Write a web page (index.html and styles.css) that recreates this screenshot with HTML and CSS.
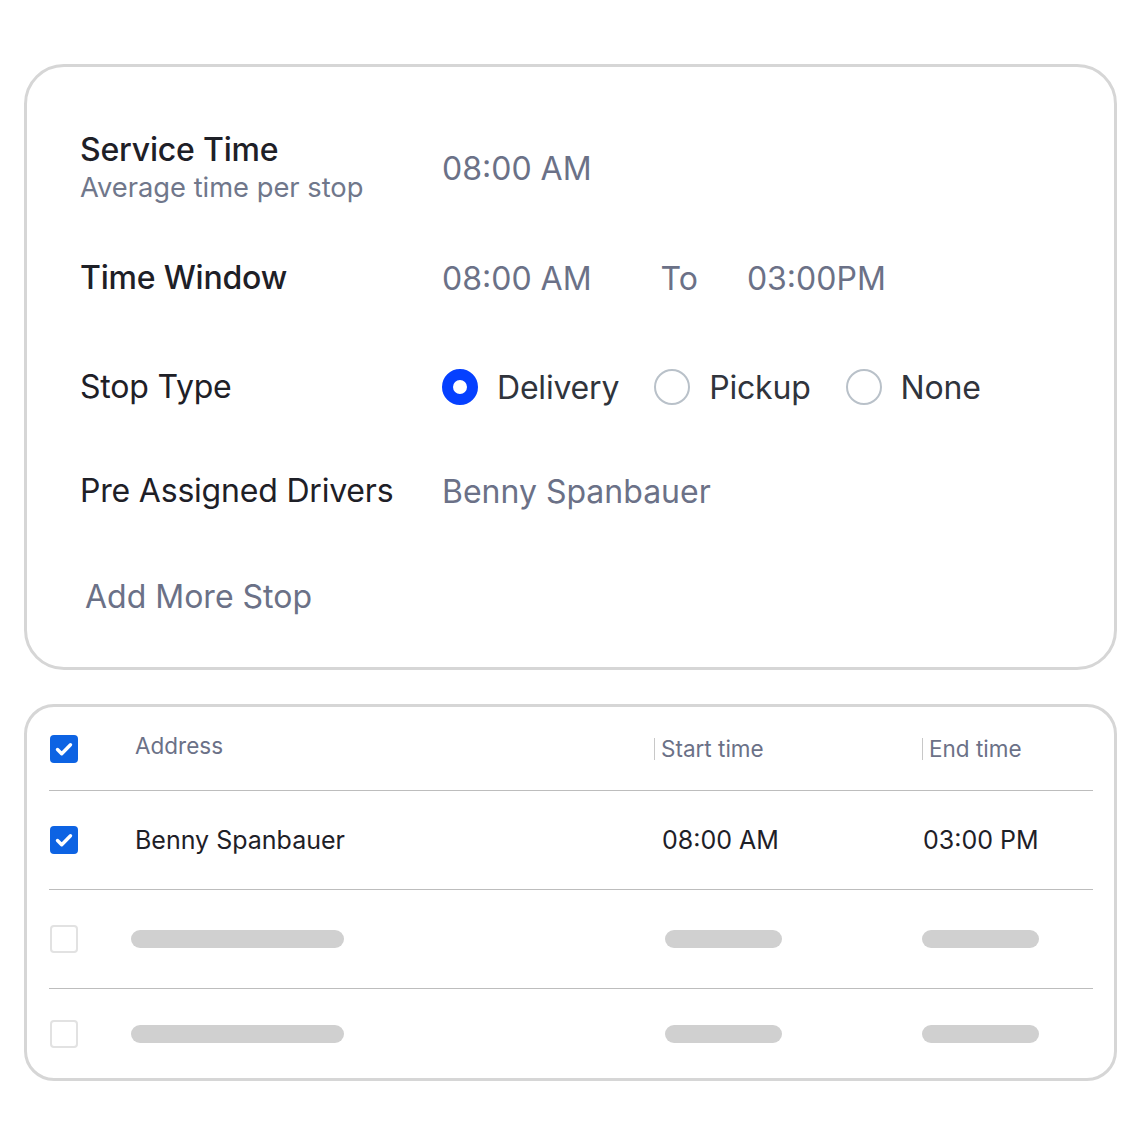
FILE: index.html
```html
<!DOCTYPE html>
<html lang="en">
<head>
    <meta charset="UTF-8">
    <meta name="viewport" content="width=device-width, initial-scale=1.0">
    <title>Stop Settings</title>
    <link rel="stylesheet" href="styles.css">
</head>
<body>

<div class="page">
    <div class="card settings">
        <div class="field">
            <div class="label">
                <div class="label-title strong">Service Time</div>
                <div class="label-hint">Average time per stop</div>
            </div>
            <div class="value">08:00 AM</div>
        </div>

        <div class="field">
            <div class="label-title strong">Time Window</div>
            <div class="value">
                <span>08:00 AM</span>
                <span class="to">To</span>
                <span>03:00PM</span>
            </div>
        </div>

        <div class="field">
            <div class="label-title">Stop Type</div>
            <div class="radios">
                <label class="radio"><span class="dot checked"></span>Delivery</label>
                <label class="radio"><span class="dot"></span>Pickup</label>
                <label class="radio"><span class="dot"></span>None</label>
            </div>
        </div>

        <div class="field">
            <div class="label-title">Pre Assigned Drivers</div>
            <div class="value">Benny Spanbauer</div>
        </div>

        <div class="field">
            <button class="add-stop">Add More Stop</button>
        </div>
    </div>

    <div class="card stops">
        <div class="row head">
            <span class="check on">
                <svg viewBox="0 0 28 28" width="28" height="28"><path d="M7.5 14.5l4.2 4.2 8.8-9" fill="none" stroke="#fff" stroke-width="3.4" stroke-linecap="round" stroke-linejoin="round"/></svg>
            </span>
            <div class="th">Address</div>
            <div class="th sep start-sep">Start time</div>
            <div class="th sep">End time</div>
        </div>

        <div class="row">
            <span class="check on">
                <svg viewBox="0 0 28 28" width="28" height="28"><path d="M7.5 14.5l4.2 4.2 8.8-9" fill="none" stroke="#fff" stroke-width="3.4" stroke-linecap="round" stroke-linejoin="round"/></svg>
            </span>
            <div class="td">Benny Spanbauer</div>
            <div class="td time">08:00 AM</div>
            <div class="td time">03:00 PM</div>
        </div>

        <div class="row">
            <span class="check"></span>
            <div><div class="skeleton wide"></div></div>
            <div><div class="skeleton short shift"></div></div>
            <div><div class="skeleton short"></div></div>
        </div>

        <div class="row last">
            <span class="check"></span>
            <div><div class="skeleton wide"></div></div>
            <div><div class="skeleton short shift"></div></div>
            <div><div class="skeleton short"></div></div>
        </div>
    </div>
</div>

</body>
</html>
```

FILE: styles.css
```css
body, html {
    margin: 0;
    padding: 0;
    font-family: Inter, "Noto Sans", sans-serif;
    background-color: #fff;
}

.page {
    padding: 64px 24px 40px 24px;
    display: flex;
    flex-direction: column;
    gap: 34px;
}

.card {
    border: 3px solid #d6d6d6;
    background-color: #fff;
}

/* Top form card */
.settings {
    border-radius: 40px;
    padding: 48px 0 17px 53px;
}

.field {
    display: flex;
    align-items: center;
    height: 107px;
}

/* rows are not evenly spaced */
.field:nth-child(2) { height: 112px; }
.field:nth-child(3) { height: 106px; }
.field:nth-child(4) { height: 102px; }
.field:nth-child(5) { height: 108px; }

.field > :first-child {
    width: 362px;
    flex-shrink: 0;
}

.label-title {
    font-size: 32px;
    line-height: 38px;
    letter-spacing: -0.2px;
    color: #1e2027;
}

.label-title.strong {
    font-weight: 500;
}

.label-hint {
    font-size: 27.3px;
    line-height: 38px;
    color: #70778b;
}

.value {
    font-size: 32px;
    color: #6b7187;
    display: flex;
}

.value .to {
    margin: 0 49px 0 69px;
}

.radios {
    display: flex;
    gap: 35px;
}

.radio {
    display: flex;
    align-items: center;
    gap: 19px;
    font-size: 32px;
    letter-spacing: -0.2px;
    color: #30343c;
}

.dot {
    width: 32px;
    height: 32px;
    border: 2px solid #b9c1c9;
    border-radius: 50%;
    box-sizing: content-box;
}

.dot.checked {
    width: 14px;
    height: 14px;
    border: 11px solid #0540ff;
}

.add-stop {
    font-family: inherit;
    font-size: 32px;
    color: #6b7187;
    background: none;
    border: none;
    padding: 0 0 0 5px;
    text-align: left;
    cursor: pointer;
}

/* Stops table card */
.stops {
    border-radius: 30px;
    padding: 0 21px 0 22px;
}

.row {
    display: grid;
    grid-template-columns: 86px 526px 261px 1fr;
    align-items: center;
    height: 98px;
    border-top: 1px solid #bdbdbd;
}

.row.head {
    height: 83px;
    border-top: none;
}

.row.last {
    height: 89px;
}

.check {
    width: 28px;
    height: 28px;
    margin-left: 1px;
    box-sizing: border-box;
    border: 2px solid #e2e2e2;
    border-radius: 4px;
}

.check.on {
    border: none;
    background-color: #0d63e3;
}

.check svg {
    display: block;
}

.th {
    font-size: 22.5px;
    color: #6b7187;
}

.head .th:nth-child(2) {
    margin-top: -7px;
}

.th.sep {
    border-left: 1px solid #c8c8c8;
    padding-left: 6px;
    line-height: 22px;
}

.th.start-sep {
    margin-left: -7px;
}

.td {
    font-size: 25px;
    color: #1e2027;
}

.td.time {
    padding-left: 1px;
}

.skeleton {
    height: 18px;
    border-radius: 9px;
    background-color: #d0d0d0;
}

.skeleton.wide {
    width: 213px;
    margin-left: -4px;
}

.skeleton.short {
    width: 117px;
}

.skeleton.shift {
    margin-left: 4px;
}
```
